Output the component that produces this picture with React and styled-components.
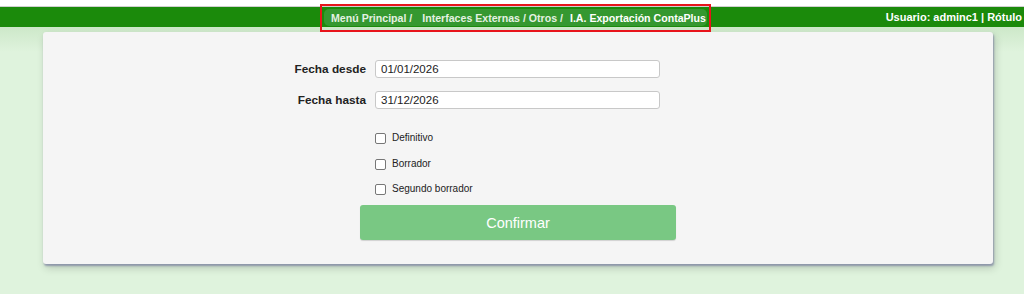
import React from "react";
import styled, { createGlobalStyle } from "styled-components";

const Global = createGlobalStyle`
  html, body { margin: 0; padding: 0; }
  body {
    font-family: "Liberation Sans", Arial, Helvetica, sans-serif;
    background: #dff3dd;
    min-height: 294px;
    overflow: hidden;
  }
`;

const Page = styled.div`
  min-height: 294px;
  padding-top: 7px;
  box-sizing: border-box;
  background: linear-gradient(to bottom, #ffffff 0, #ffffff 6px, #d0d0d0 6px, #d0d0d0 7px, #1b8a0b 7px, #1b8a0b 27px, #cde8c9 27px, #dff3dd 52px, #dff3dd 100%);
`;

const TopBar = styled.header`
  height: 20px;
  display: grid;
  grid-template-columns: 1fr auto 1fr;
  align-items: center;
  color: #ffffff;
  font-weight: bold;
`;

const Highlight = styled.div`
  grid-column: 2;
  align-self: start;
  margin: -3px 0 -5px 7px;
  border: 2px solid #e8141b;
  padding: 3px 2px 4px 2px;
  display: flex;
`;

const Crumbs = styled.nav`
  display: flex;
  align-items: center;
  height: 17px;
  padding: 0 1px 0 7px;
  background: #359830;
  border-radius: 5px;
  white-space: nowrap;
  font-size: 10.6px;
`;

const Crumb = styled.span`
  color: ${(p) => (p.$current ? "#ffffff" : "#e4f1e2")};
  margin-right: ${(p) => (p.$current ? "0" : "7px")};
`;

const UserInfo = styled.div`
  grid-column: 3;
  justify-self: end;
  padding-right: 2px;
  white-space: nowrap;
  font-size: 11px;
`;

const Card = styled.main`
  margin: 5px 31px 0 43px;
  height: 232px;
  box-sizing: border-box;
  background: #f5f5f5;
  border-radius: 3px;
  box-shadow: 1px 2px 2px rgba(120, 125, 160, 0.7), 2px 4px 8px rgba(0, 0, 0, 0.18);
  padding-top: 28px;
`;

const Form = styled.form`
  display: grid;
  grid-template-columns: 1fr 15px 285px 16px 1fr;
  row-gap: 13px;
  align-items: center;
`;

const Label = styled.label`
  grid-column: 1 / span 2;
  justify-self: end;
  padding-right: 9px;
  font-size: 11.8px;
  font-weight: bold;
  color: #222;
`;

const TextInput = styled.input`
  grid-column: 3;
  box-sizing: border-box;
  height: 18px;
  width: 285px;
  margin: 0;
  padding: 0 5px;
  border: 1px solid #c8c8c8;
  border-radius: 3px;
  background: #fff;
  font-family: "Liberation Sans", Arial, sans-serif;
  font-size: 11.5px;
  color: #222;
  outline: none;
`;

const Checks = styled.div`
  grid-column: 3;
  display: flex;
  flex-direction: column;
  gap: 14.5px;
  padding-top: 11px;
`;

const CheckRow = styled.label`
  display: flex;
  align-items: center;
  height: 11px;
  font-size: 10px;
  color: #222;
`;

const Box = styled.span`
  width: 11px;
  height: 11px;
  box-sizing: border-box;
  border: 1px solid #777;
  border-radius: 2px;
  background: #fff;
  margin-right: 6px;
  flex: none;
`;

const CheckText = styled.span`
  line-height: 11px;
  position: relative;
  top: -1px;
`;

const Button = styled.button`
  grid-column: 2 / span 3;
  margin-top: -3px;
  height: 35px;
  border: none;
  border-radius: 3px;
  background: #79c883;
  box-shadow: 0 1px 1px rgba(0, 0, 0, 0.15);
  color: #fff;
  font-family: "Liberation Sans", Arial, sans-serif;
  font-size: 14.5px;
`;

const checks = ["Definitivo", "Borrador", "Segundo borrador"];

export default function App() {
  return (
    <Page>
      <Global />
      <TopBar>
        <Highlight>
          <Crumbs>
            <Crumb>Menú Principal /</Crumb>
            <Crumb>&nbsp;Interfaces Externas / Otros /</Crumb>
            <Crumb $current>I.A. Exportación ContaPlus</Crumb>
          </Crumbs>
        </Highlight>
        <UserInfo>Usuario: adminc1 | Rótulo</UserInfo>
      </TopBar>
      <Card>
        <Form onSubmit={(e) => e.preventDefault()}>
          <Label>Fecha desde</Label>
          <TextInput defaultValue="01/01/2026" />
          <Label>Fecha hasta</Label>
          <TextInput defaultValue="31/12/2026" />
          <Checks>
            {checks.map((c) => (
              <CheckRow key={c}>
                <Box />
                <CheckText>{c}</CheckText>
              </CheckRow>
            ))}
          </Checks>
          <Button type="submit">Confirmar</Button>
        </Form>
      </Card>
    </Page>
  );
}
